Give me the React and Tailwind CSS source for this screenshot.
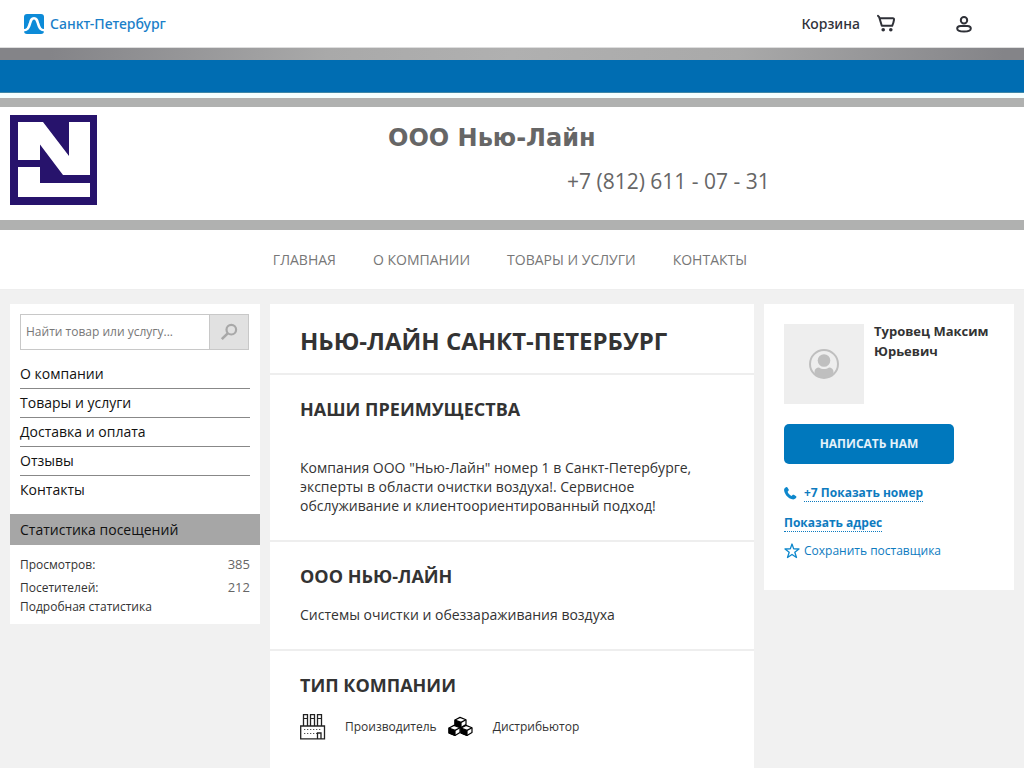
const topLinks = ['Главная', 'О компании', 'Товары и услуги', 'Контакты'];
const sideLinks = ['О компании', 'Товары и услуги', 'Доставка и оплата', 'Отзывы', 'Контакты'];

function PortalIcon() {
  return (
    <svg className="h-5 w-5" viewBox="0 0 20 20" aria-hidden="true">
      <rect width="20" height="20" rx="3" fill="#0d8bd8" />
      <path
        d="M0 16.2C3.600 16.200 4.600 14 6 9.500C7 6 7.600 4.300 10 4.300S13 6 14 9.500C15.400 14 16.400 16.200 20 16.200"
        fill="none"
        stroke="#fff"
        strokeWidth="2.6"
      />
    </svg>
  );
}

function CartIcon() {
  return (
    <svg className="h-5 w-5" viewBox="0 0 20 20" fill="none" aria-hidden="true">
      <path
        d="M2 1.800 3.200 3.200 5.800 11.800h10.400c.8-1.700 1.500-4.200 1.800-6 .1-.9-.3-1.500-1.200-1.500H4"
        stroke="#2f3138"
        strokeWidth="2"
        strokeLinecap="round"
        strokeLinejoin="round"
      />
      <circle cx="7.200" cy="15.700" r="1.800" fill="#2f3138" />
      <circle cx="14.800" cy="15.700" r="1.800" fill="#2f3138" />
    </svg>
  );
}

function UserIcon() {
  return (
    <svg className="h-5 w-5" viewBox="0 0 20 20" fill="none" stroke="#2f3138" strokeWidth="2" aria-hidden="true">
      <circle cx="10" cy="6.200" r="3.200" />
      <path d="M6.500 12h7c2 0 3.300 1 3.300 2.600 0 2-2.800 3-6.800 3s-6.800-1-6.800-3C3.200 13 4.500 12 6.500 12z" />
    </svg>
  );
}

function CompanyLogo() {
  return (
    <svg className="h-[90px] w-[87px]" viewBox="0 0 87 90" role="img" aria-label="Нью-Лайн">
      <path fill="#27136c" d="M0 0h87v90H0z" />
      <path fill="#fff" d="M8 7h25l26 34V7h21v53H53L30 29.500V45H8z" />
      <path fill="#fff" d="M8 52h22v16h50v14H8z" />
    </svg>
  );
}

function SearchIcon() {
  return (
    <svg className="h-5 w-5" viewBox="0 0 20 20" fill="none" stroke="#a8a8a8" aria-hidden="true">
      <circle cx="12.300" cy="7.700" r="4.800" strokeWidth="2.200" />
      <path d="M8.700 11.300 2.800 17.200" strokeWidth="2.600" />
    </svg>
  );
}

function AvatarIcon() {
  return (
    <svg className="h-[30px] w-[30px]" viewBox="0 0 30 30" fill="#bfbfbf" aria-hidden="true">
      <circle cx="15" cy="15" r="14" fill="none" stroke="#bfbfbf" strokeWidth="2" />
      <circle cx="15" cy="11.500" r="6.300" />
      <path d="M5.500 25v-2c0-3 2-4.500 4.500-4.500 3 2 7 2 10 0 2.500 0 4.500 1.500 4.500 4.500v2A14 14 0 0 1 15 29a14 14 0 0 1-9.500-4z" />
    </svg>
  );
}

function PhoneIcon() {
  return (
    <svg className="h-3 w-3" viewBox="0 0 12 12" fill="#0d87cc" overflow="visible" aria-hidden="true">
      <path d="M2.200.2C.4.8-.2 2.300.2 4c1 4 4 7.400 7.900 8.300 1.700.3 3.500-.2 4.200-1.700.2-.5.200-1-.2-1.300L9.900 7.800c-.5-.3-1-.2-1.400.2l-.9 1C5.800 8.200 4.400 6.700 3.600 4.700l.9-.9c.4-.4.400-.8.2-1.200L3.400.6C3.100.1 2.700 0 2.200.2z" />
    </svg>
  );
}

function StarIcon() {
  return (
    <svg className="h-4 w-4" viewBox="0 0 16 16" fill="none" stroke="#0d87cc" strokeWidth="1.300" strokeLinejoin="round" aria-hidden="true">
      <path d="m8 1 1.700 4.900 5.300.1-4.200 3.200 1.700 5.300L8 11.500l-4.500 3 1.700-5.300L1 6l5.300-.1z" />
    </svg>
  );
}

function FactoryIcon() {
  return (
    <svg className="h-[26px] w-[26px] shrink-0" viewBox="0 0 26 26" fill="none" stroke="#222" aria-hidden="true">
      <path d="M.7 12h23.800v12.800H.7z" strokeWidth="1.300" />
      <path d="M3.500 12V.7h4V12M10.500 12V.7h4V12M17.500 12V.7h4V12" strokeWidth="1.300" />
      <path d="M3.500 4.500h4M10.500 4.500h4M17.500 4.500h4" />
      <path d="M4 15.500h18M4 19.500h13" stroke="#555" strokeDasharray="1.300 1.700" />
      <path d="M17.500 25v-6h3.500v6" strokeWidth="1.300" />
    </svg>
  );
}

function Cube({ x, y }) {
  return (
    <g transform={`translate(${x} ${y})`} stroke="#000" strokeWidth="1.200" strokeLinejoin="round">
      <path fill="#fff" d="M0 3 5 .4l6 2.300v4.800l-5 3-6-2.500z" />
      <path d="m0 3 6 2.400v5.100L0 8z" />
      <path fill="none" d="m6 5.400 5-2.700" />
    </g>
  );
}

function CubesIcon() {
  return (
    <svg className="h-[26px] w-[26px] shrink-0" viewBox="0 0 26 26" aria-hidden="true">
      <Cube x={7} y={3} />
      <Cube x={1} y={11} />
      <Cube x={13} y={11} />
    </svg>
  );
}

function Section({ title, children }) {
  return (
    <section className="border-t-2 border-[#eee] px-[30px] pb-[25px] pt-5">
      <h2 className="text-[18px] font-bold uppercase leading-7">{title}</h2>
      {children}
    </section>
  );
}

function Header() {
  return (
    <header>
      <div className="flex h-12 items-center justify-between border-b border-[#dedede] bg-white pl-6 pr-[50px] font-['Noto_Sans'] text-sm font-medium">
        <a href="#city" className="flex items-center gap-1.5 text-[#1a7fc9]">
          <PortalIcon />
          Санкт-Петербург
        </a>
        <div className="flex items-center">
          <a href="#cart" className="flex items-center gap-4 text-[#2f3138]">
            Корзина
            <CartIcon />
          </a>
          <a href="#login" aria-label="Войти" className="ml-[58px]">
            <UserIcon />
          </a>
        </div>
      </div>
      <div className="h-3 bg-[linear-gradient(100deg,#848488_5%,#a9a9a9_32%,#b0b0b0_50%,#a9a9a9_72%,#848488_98%)]" />
      <div className="h-[33px] border-b border-[#3f87a8] bg-[#006db2]" />
      <div className="h-[5px] bg-[#f5ffff]" />
      <div className="grid h-[132px] grid-cols-[1fr_auto_1fr] border-b-[10px] border-t-[9px] border-[#b0b1b0] bg-white px-2.5 pt-2">
        <a href="#home" className="justify-self-start">
          <CompanyLogo />
        </a>
        <div className="w-[276px] text-[#666]">
          <p className="ml-3.5 whitespace-nowrap font-['DejaVu_Sans'] text-2xl font-bold leading-[46px]">ООО Нью-Лайн</p>
          <p className="ml-[193px] whitespace-nowrap text-[21px] leading-10">+7 (812) 611 - 07 - 31</p>
        </div>
      </div>
      <nav className="flex h-[60px] items-center justify-center gap-[37px] border-b border-[#eee] bg-white pr-1 text-sm uppercase text-[#777]">
        {topLinks.map((link) => (
          <a key={link} href="#page">
            {link}
          </a>
        ))}
      </nav>
    </header>
  );
}

function Sidebar() {
  return (
    <aside className="w-[250px] shrink-0 self-start bg-white pb-[9px] pt-2.5">
      <form className="mx-2.5 flex h-9 w-[229px] border border-[#c8c8c8]">
        <input
          type="text"
          aria-label="Найти товар или услугу"
          placeholder="Найти товар или услугу..."
          className="min-w-0 flex-1 px-[5px] text-xs outline-none placeholder:text-[#777]"
        />
        <button type="button" aria-label="Найти" className="flex w-[39px] items-center justify-center border-l border-[#c8c8c8] bg-[#e1e1e1]">
          <SearchIcon />
        </button>
      </form>
      <ul className="mx-2.5 mb-2.5 mt-2.5 text-sm text-[#111]">
        {sideLinks.map((link) => (
          <li key={link} className="border-b border-[#888] last:border-0">
            <a href="#page" className="block leading-7">
              {link}
            </a>
          </li>
        ))}
      </ul>
      <h3 className="bg-[#a6a6a6] px-2.5 text-sm leading-[31px] text-[#111]">Статистика посещений</h3>
      <div className="px-2.5 pt-2 text-xs text-[#333]">
        <p className="flex justify-between leading-[23px]">
          Просмотров: <span className="text-[13px] text-[#666]">385</span>
        </p>
        <p className="flex justify-between leading-[23px]">
          Посетителей: <span className="text-[13px] text-[#666]">212</span>
        </p>
        <a href="#stats" className="block leading-4">
          Подробная статистика
        </a>
      </div>
    </aside>
  );
}

function Contacts() {
  return (
    <aside className="w-[250px] shrink-0 self-start bg-white px-5 pb-[30px] pt-5 text-xs text-[#0d7bbf]">
      <div className="flex gap-2.5">
        <div className="flex h-20 w-20 shrink-0 items-center justify-center bg-[#eee]">
          <AvatarIcon />
        </div>
        <p className="-mt-[3px] text-[13px] font-bold leading-5 text-[#333]">Туровец Максим Юрьевич</p>
      </div>
      <button type="button" className="mt-5 h-10 w-[170px] rounded-[5px] bg-[#0078bd] text-xs font-bold uppercase text-[#e4f2fa]">
        Написать нам
      </button>
      <div className="mt-5 flex items-center gap-2">
        <PhoneIcon />
        <a href="#phone" className="border-b border-dotted border-[#0d7bbf] font-bold leading-[17px]">
          +7 Показать номер
        </a>
      </div>
      <div className="mt-3 flex">
        <a href="#address" className="border-b border-dotted border-[#0d7bbf] font-bold leading-[17px]">
          Показать адрес
        </a>
      </div>
      <a href="#save" className="mt-2.5 flex items-center gap-1 leading-[18px]">
        <StarIcon />
        Сохранить поставщика
      </a>
    </aside>
  );
}

export default function App() {
  return (
    <div className="flex min-h-screen flex-col bg-[#f1f1f1] font-['Open_Sans',sans-serif] text-[#333]">
      <Header />
      <div className="flex flex-1 gap-2.5 px-2.5 pt-3.5">
        <Sidebar />
        <main className="min-w-0 flex-1 bg-white">
          <h1 className="px-[30px] pb-4 pt-5 text-2xl font-bold uppercase leading-[33px]">Нью-Лайн Санкт-Петербург</h1>
          <Section title="Наши преимущества">
            <p className="mt-[35px] text-sm leading-[19px]">
              Компания ООО "Нью-Лайн" номер 1 в Санкт-Петербурге, эксперты в области очистки воздуха!. Сервисное
              обслуживание и клиентоориентированный подход!
            </p>
          </Section>
          <Section title="ООО Нью-Лайн">
            <p className="mt-[15px] text-sm leading-[19px]">Системы очистки и обеззараживания воздуха</p>
          </Section>
          <Section title="Тип компании">
            <ul className="mt-[15px] flex gap-[11px] text-xs">
              <li className="flex items-center gap-[19px]">
                <FactoryIcon />
                Производитель
              </li>
              <li className="flex items-center gap-[19px]">
                <CubesIcon />
                Дистрибьютор
              </li>
            </ul>
          </Section>
        </main>
        <Contacts />
      </div>
    </div>
  );
}
